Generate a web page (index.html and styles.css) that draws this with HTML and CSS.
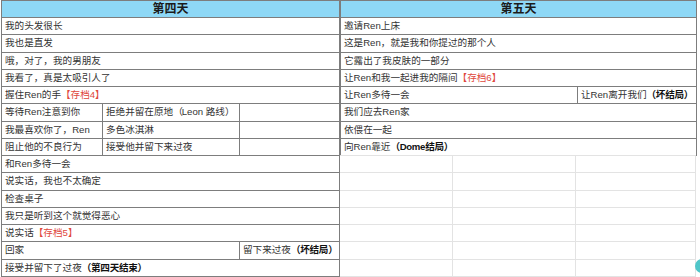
FILE: index.html
```html
<!DOCTYPE html>
<html lang="zh">
<head>
<meta charset="utf-8">
<link rel="stylesheet" href="styles.css">
</head>
<body>
<div class="sheet">
  <div class="tbl tbl-left">
    <div class="cell head span3">第四天</div>
    <div class="cell span3">我的头发很长</div>
    <div class="cell span3">我也是直发</div>
    <div class="cell span3">哦，对了，我的男朋友</div>
    <div class="cell span3">我看了，真是太吸引人了</div>
    <div class="cell span3">握住Ren的手<span class="save">【存档4】</span></div>
    <div class="cell">等待Ren注意到你</div>
    <div class="cell">拒绝并留在原地<span class="paren">（</span>Leon 路线<span class="paren">）</span></div>
    <div class="cell"></div>
    <div class="cell">我最喜欢你了，Ren</div>
    <div class="cell">多色冰淇淋</div>
    <div class="cell"></div>
    <div class="cell">阻止他的不良行为</div>
    <div class="cell">接受他并留下来过夜</div>
    <div class="cell"></div>
    <div class="cell span3">和Ren多待一会</div>
    <div class="cell span3">说实话，我也不太确定</div>
    <div class="cell span3">检查桌子</div>
    <div class="cell span3">我只是听到这个就觉得恶心</div>
    <div class="cell span3">说实话<span class="save">【存档5】</span></div>
    <div class="cell span2">回家</div>
    <div class="cell">留下来过夜<b>（坏结局）</b></div>
    <div class="cell span3">接受并留下了过夜<b>（第四天结束）</b></div>
  </div>
  <div class="right">
    <div class="tbl tbl-right">
      <div class="cell head span2">第五天</div>
      <div class="cell span2">邀请Ren上床</div>
      <div class="cell span2">这是Ren，就是我和你提过的那个人</div>
      <div class="cell span2">它露出了我皮肤的一部分</div>
      <div class="cell span2">让Ren和我一起进我的隔间<span class="save">【存档6】</span></div>
      <div class="cell">让Ren多待一会</div>
      <div class="cell">让Ren离开我们<b>（坏结局）</b></div>
      <div class="cell span2">我们应去Ren家</div>
      <div class="cell span2">依偎在一起</div>
      <div class="cell span2">向Ren靠近<b>（Dome结局）</b></div>
    </div>
    <div class="filler">
      <div></div><div></div><div></div>
      <div></div><div></div><div></div>
      <div></div><div></div><div></div>
      <div></div><div></div><div></div>
      <div></div><div></div><div></div>
      <div></div><div></div><div></div>
      <div></div><div></div><div></div>
    </div>
  </div>
</div>
<div class="fab"></div>
</body>
</html>
```

FILE: styles.css
```css
html, body {
  margin: 0;
  padding: 0;
  background: #ffffff;
}
body {
  width: 700px;
  height: 277px;
  overflow: hidden;
  position: relative;
  font-family: "Liberation Sans", "Noto Sans CJK SC", sans-serif;
  font-size: 9.6px;
  color: #333333;
}
.sheet {
  display: flex;
  align-items: flex-start;
  padding-left: 1px;
}
.tbl {
  display: grid;
  gap: 1px;
  background: #7d7d7d;
  border: 1px solid #7d7d7d;
}
.tbl-left {
  grid-template-columns: 100px 136px 99px;
  grid-template-rows: 16px repeat(15, 16.25px);
}
.right {
  display: flex;
  flex-direction: column;
  width: 357px;
}
.tbl-right {
  grid-template-columns: 236px 118px;
  grid-template-rows: 16px repeat(8, 16.25px);
}
.cell {
  background: #ffffff;
  display: flex;
  align-items: center;
  padding-left: 3px;
  white-space: nowrap;
  overflow: hidden;
  line-height: 14px;
}
.span2 { grid-column: span 2; }
.span3 { grid-column: span 3; }
.head {
  background: #8ed8f6;
  justify-content: center;
  padding-left: 0;
  font-weight: bold;
  font-size: 12px;
  color: #1b1b1b;
}
.save {
  color: #e0473c;
}
.paren {
  letter-spacing: -1px;
}
b {
  font-weight: bold;
  color: #111111;
  letter-spacing: -0.3px;
}
.filler {
  display: grid;
  grid-template-columns: 112px 122px 119px;
  grid-template-rows: repeat(7, 16.25px);
  gap: 1px;
  background: #e3e3e3;
  padding: 1px 1px 1px 0;
  margin-top: -1px;
  width: 355px;
}
.filler div {
  background: #ffffff;
}
.fab {
  position: absolute;
  left: 695px;
  top: 259px;
  width: 14px;
  height: 14px;
  border-radius: 50%;
  background: #4fc6c9;
}
```
